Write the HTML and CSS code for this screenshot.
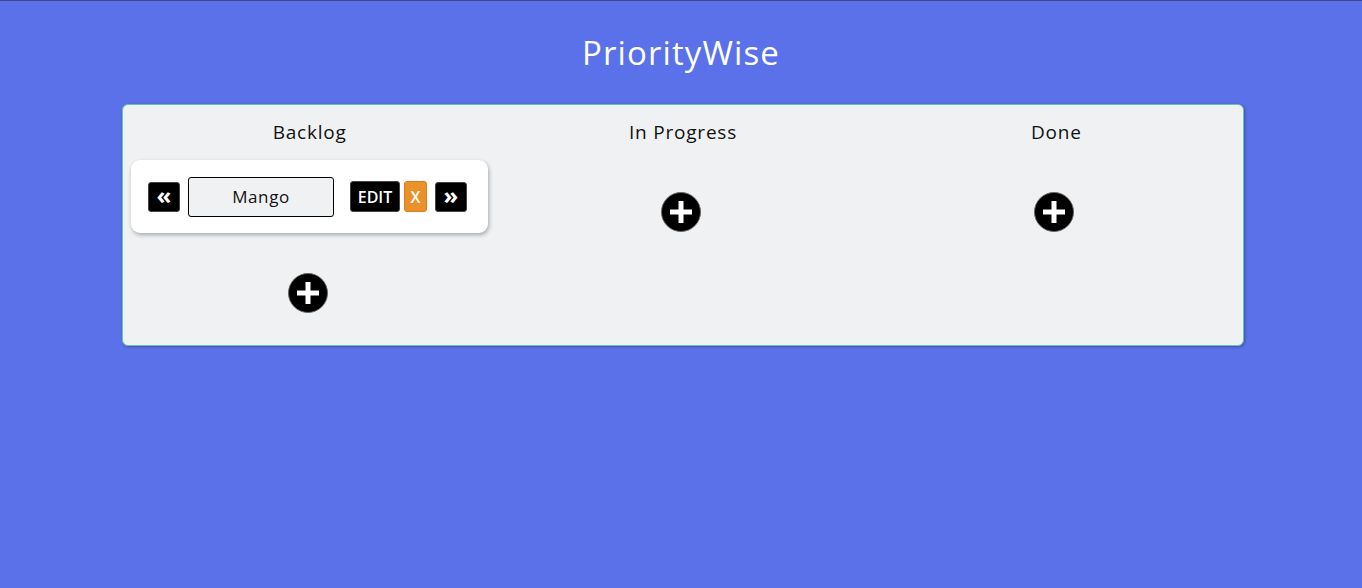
FILE: index.html
```html
<!DOCTYPE html>
<html lang="en">
<head>
<meta charset="utf-8">
<title>PriorityWise</title>
<link rel="stylesheet" href="styles.css">
</head>
<body>
<div class="topline"></div>
<h1 class="title">PriorityWise</h1>
<main class="board">
  <section class="column">
    <h2 class="column-title">Backlog</h2>
    <div class="list">
      <div class="card">
        <button class="move">&laquo;</button>
        <input class="task" type="text" value="Mango">
        <div class="actions">
          <button class="edit">EDIT</button>
          <button class="remove">X</button>
        </div>
        <button class="move">&raquo;</button>
      </div>
    </div>
    <button class="add" aria-label="Add">
      <svg viewBox="0 0 40 40" width="40" height="40"><circle cx="20" cy="20" r="19.5" fill="#000" stroke="#666" stroke-width="1"/><rect x="9" y="17.5" width="22" height="5" fill="#fff"/><rect x="17.5" y="9" width="5" height="22" fill="#fff"/></svg>
    </button>
  </section>
  <section class="column">
    <h2 class="column-title">In Progress</h2>
    <div class="list"></div>
    <button class="add" aria-label="Add">
      <svg viewBox="0 0 40 40" width="40" height="40"><circle cx="20" cy="20" r="19.5" fill="#000" stroke="#666" stroke-width="1"/><rect x="9" y="17.5" width="22" height="5" fill="#fff"/><rect x="17.5" y="9" width="5" height="22" fill="#fff"/></svg>
    </button>
  </section>
  <section class="column">
    <h2 class="column-title">Done</h2>
    <div class="list"></div>
    <button class="add" aria-label="Add">
      <svg viewBox="0 0 40 40" width="40" height="40"><circle cx="20" cy="20" r="19.5" fill="#000" stroke="#666" stroke-width="1"/><rect x="9" y="17.5" width="22" height="5" fill="#fff"/><rect x="17.5" y="9" width="5" height="22" fill="#fff"/></svg>
    </button>
  </section>
</main>
</body>
</html>
```
FILE: styles.css
```css
* { box-sizing: border-box; }
html, body { margin: 0; padding: 0; }
body {
  background: #5a71e9;
  font-family: "Open Sans", "Noto Sans", sans-serif;
  min-height: 588px;
}
.topline { height: 1px; background: #3c4880; }
.title {
  margin: 0;
  padding-top: 32px;
  height: 103px;
  text-align: center;
  color: #fff;
  font-weight: 400;
  font-size: 33px;
  letter-spacing: 1.1px;
  line-height: 40px;
}
.board {
  margin: 0 118px 0 122px;
  display: grid;
  grid-template-columns: repeat(3, 1fr);
  background: #eff1f3;
  border: 1px solid #62c3b2;
  border-radius: 6px;
  box-shadow: 1px 1px 3px rgba(0,0,0,0.3);
  padding: 14px 0 32px;
}
.column {
  display: flex;
  flex-direction: column;
  align-items: center;
  padding: 0 8px;
}
.column-title {
  margin: 0;
  font-size: 19px;
  letter-spacing: 0.8px;
  font-weight: 400;
  line-height: 26px;
  color: #111;
  height: 41px;
}
.list { width: 100%; }
.card {
  background: #fff;
  border-radius: 9px;
  box-shadow: 1px 2px 4px rgba(0,0,0,0.3);
  height: 73px;
  margin-bottom: 8px;
  display: flex;
  align-items: center;
  padding: 0 17px;
}
.move {
  width: 32px;
  height: 30px;
  background: #000;
  color: #fff;
  border: 1px solid #444;
  border-radius: 3px;
  font-size: 24px;
  line-height: 24px;
  padding: 0 0 3px;
  font-family: "Open Sans", sans-serif;
  font-weight: 700;
  display: flex;
  align-items: center;
  justify-content: center;
}
.task {
  margin-left: 8px;
  width: 146px;
  height: 40px;
  border: 1px solid #000;
  border-radius: 3px;
  background: #eff1f3;
  text-align: center;
  font-family: inherit;
  font-size: 17px;
  letter-spacing: 0.6px;
  color: #111;
}
.actions {
  display: flex;
  gap: 4px;
  margin: 0 8px 0 16px;
}
.edit, .remove {
  height: 31px;
  border-radius: 3px;
  color: #fff;
  font-family: inherit;
  font-size: 16px;
  font-weight: 600;
  padding: 0;
}
.edit {
  width: 50px;
  background: #000;
  border: 1px solid #444;
}
.remove {
  width: 23px;
  background: #ea9229;
  border: 1px solid #d88020;
}
.add {
  margin-top: 32px;
  margin-right: 4px;
  width: 40px;
  height: 40px;
  padding: 0;
  border: 0;
  background: none;
  display: block;
}
.add svg { display: block; }
```
